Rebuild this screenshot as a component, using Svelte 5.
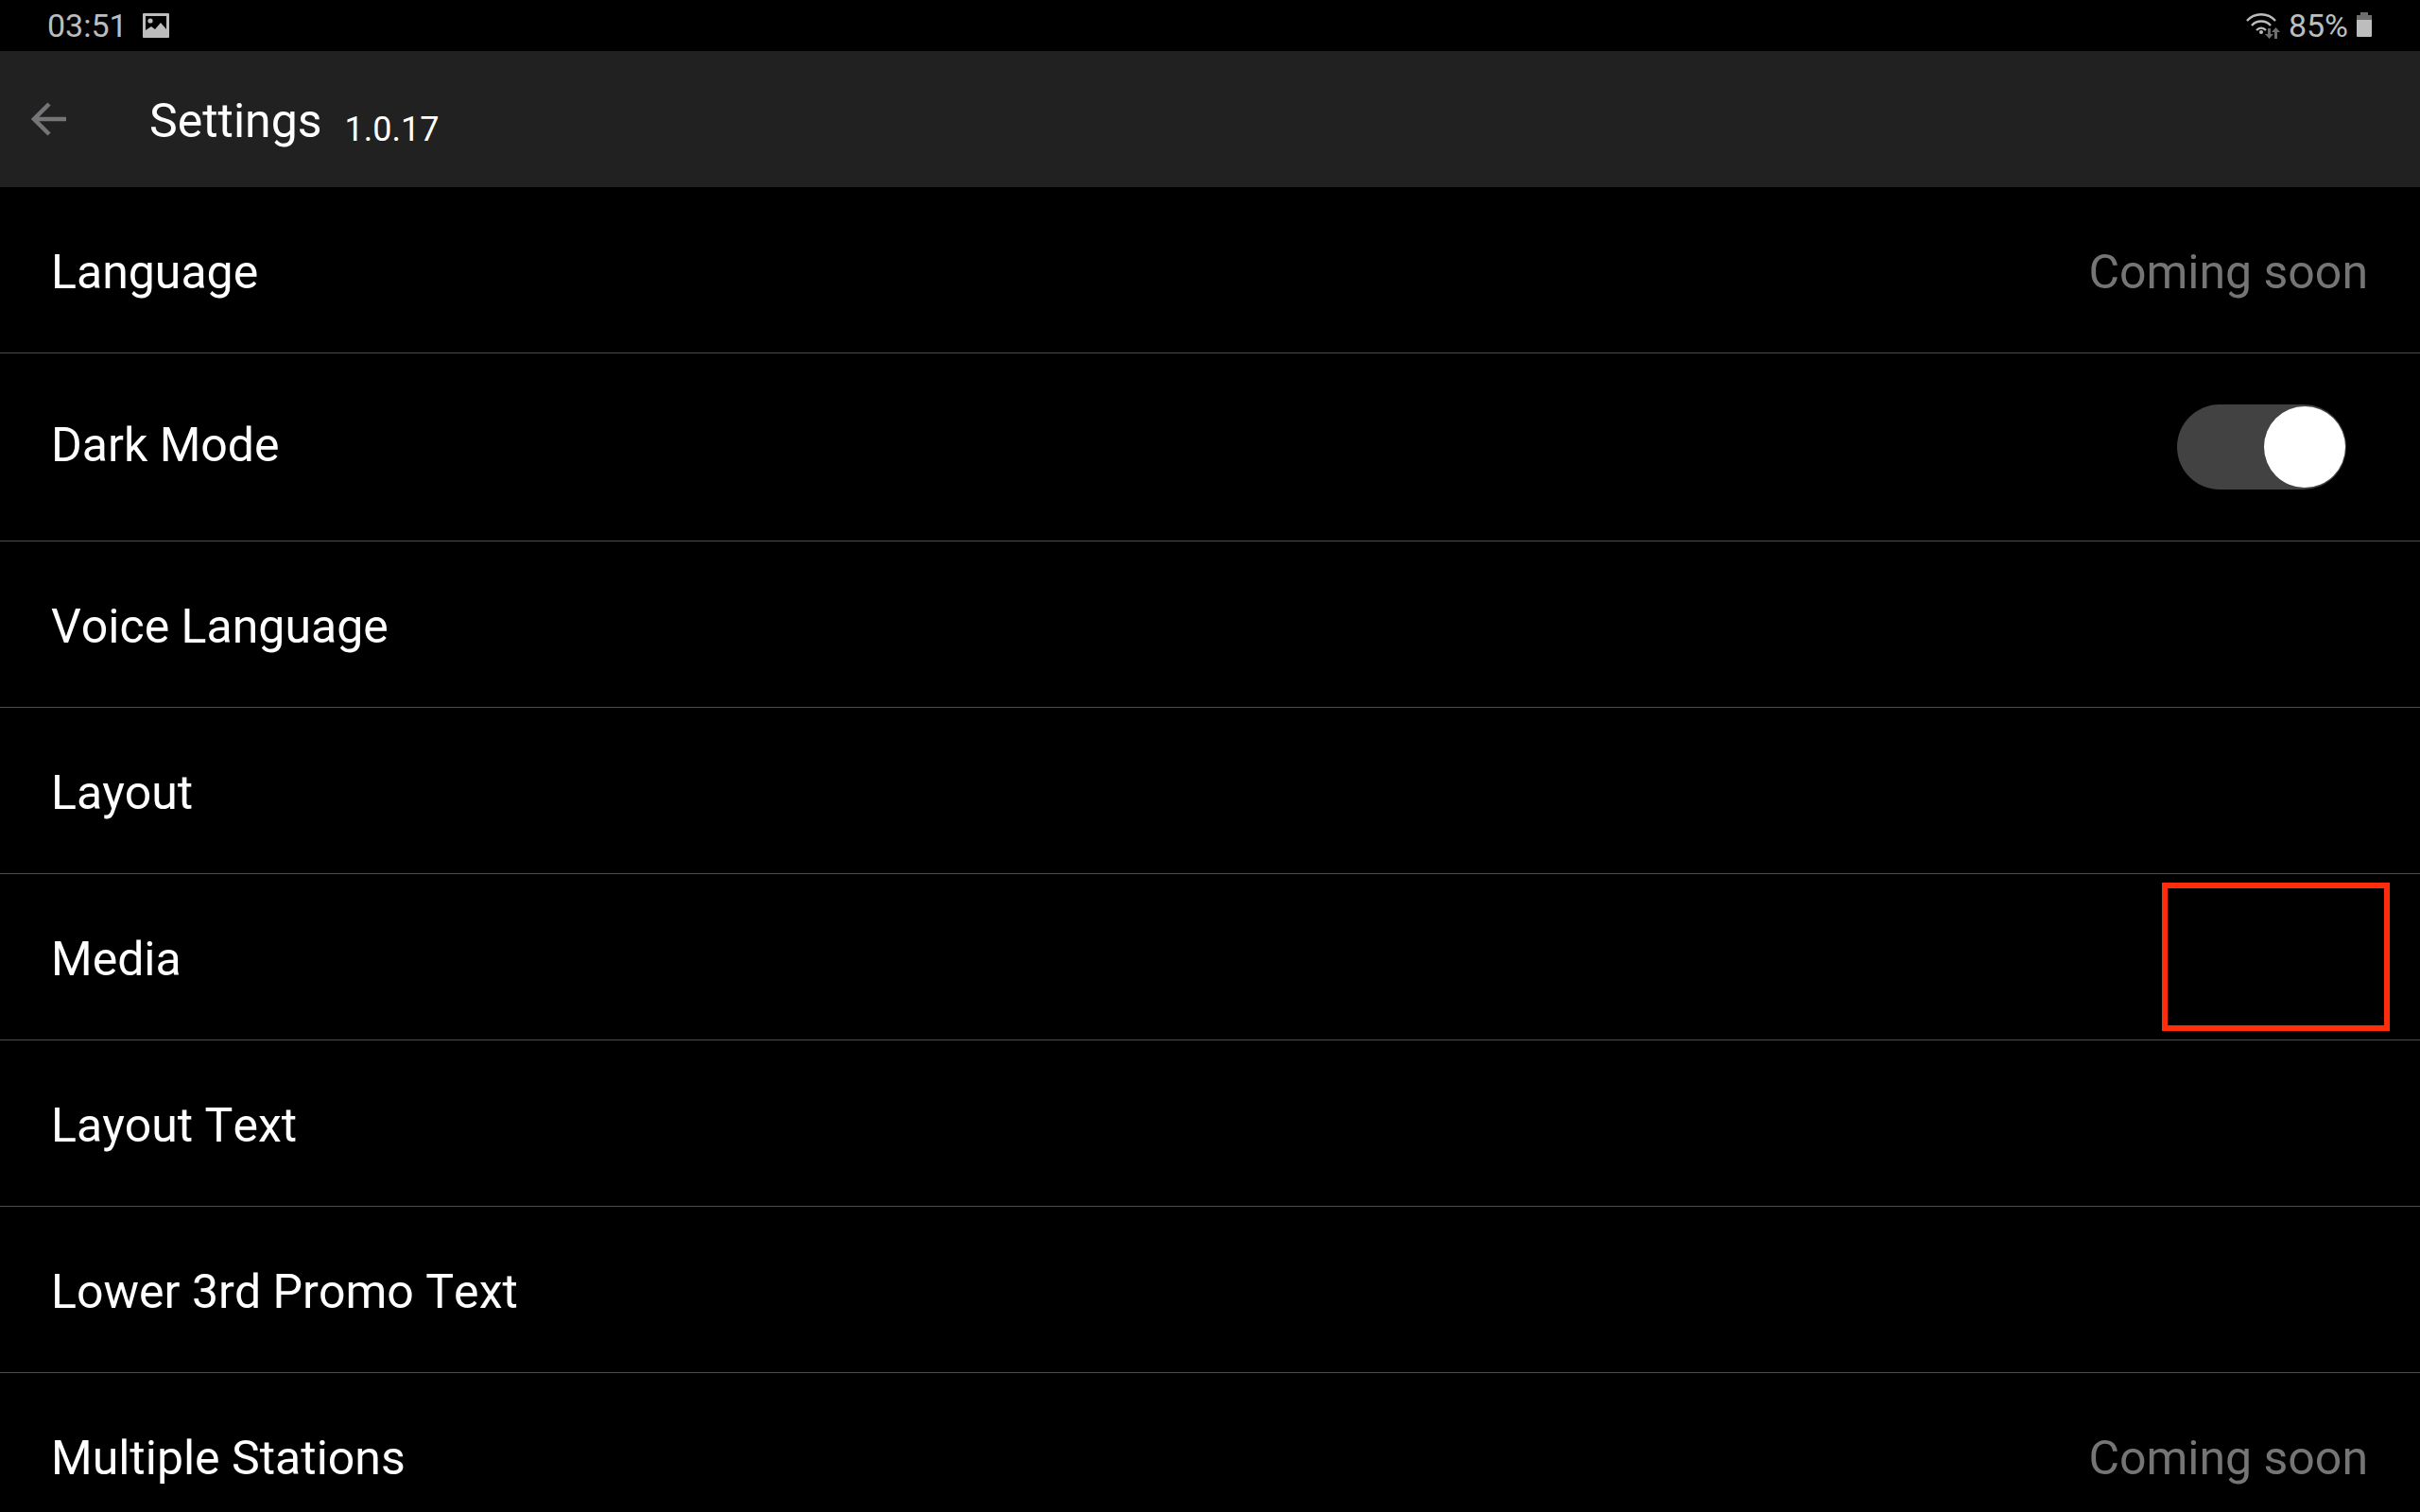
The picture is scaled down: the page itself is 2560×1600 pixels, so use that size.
<script>
  const rows = [
    { label: 'Language', note: 'Coming soon', h: 176 },
    { label: 'Dark Mode', toggle: true, h: 199 },
    { label: 'Voice Language', h: 176 },
    { label: 'Layout', h: 176 },
    { label: 'Media', marked: true, h: 176 },
    { label: 'Layout Text', h: 176 },
    { label: 'Lower 3rd Promo Text', h: 176 },
    { label: 'Multiple Stations', note: 'Coming soon', h: 176 }
  ];
</script>

<div class="screen">
  <div class="status">
    <div class="status-left">
      <span>03:51</span>
      <svg class="pic" width="28" height="26" viewBox="0 0 28 26">
        <path fill="#bdbdbd" fill-rule="evenodd" d="M1 0h26a1 1 0 0 1 1 1v24a1 1 0 0 1-1 1H1a1 1 0 0 1-1-1V1a1 1 0 0 1 1-1zM3 3v15l6-4 4 3 6-7 6 7V3z" />
        <circle cx="8" cy="8" r="2.600" fill="#bdbdbd" />
      </svg>
    </div>
    <div class="status-right">
      <svg width="38" height="28" viewBox="0 0 38 28">
        <g fill="none" stroke="#bdbdbd" stroke-width="2.400">
          <path d="M1 9C9 0 23 0 31 9" />
          <path d="M6 14c5-6 15-6 20 0" />
          <path d="M11 19c3-3 7-3 10 0" />
        </g>
        <circle cx="16" cy="21" r="2" fill="#bdbdbd" />
        <path fill="#6e6e6e" d="M23 17h3v6h3l-4.500 5-4.500-5h3z" />
        <path fill="#6e6e6e" d="M33 28h-3v-7h-3l4.500-5 4.500 5h-3z" />
      </svg>
      <span>85%</span>
      <svg width="18" height="28" viewBox="0 0 18 28">
        <path fill="#6e6e6e" d="M5 0h8v3h4v5H1V3h4z" />
        <path fill="#bdbdbd" d="M1 8h16v17a1 1 0 0 1-1 1H2a1 1 0 0 1-1-1z" />
      </svg>
    </div>
  </div>

  <header class="bar">
    <svg class="back" width="38" height="36" viewBox="0 0 38 36">
      <path fill="none" stroke="#757578" stroke-width="4.500" d="M37 18H4M19 2 3 18l16 16" />
    </svg>
    <h1>Settings</h1>
    <span class="version">1.0.17</span>
  </header>

  <div class="list">
    {#each rows as row}
      <div class="row" class:tall={row.toggle}>
        <span class="label">{row.label}</span>
        {#if row.note}
          <span class="note">{row.note}</span>
        {/if}
        {#if row.toggle}
          <div class="toggle"><div class="knob"></div></div>
        {/if}
        {#if row.marked}
          <div class="marker"></div>
        {/if}
      </div>
    {/each}
  </div>
</div>

<style>
  :global(body) {
    background: #000;
  }

  .screen {
    width: 2560px;
    height: 1600px;
    overflow: hidden;
    background: #000;
    color: #fff;
    font-family: Roboto, "Liberation Sans", sans-serif;
    font-kerning: none;
  }

  .status {
    height: 54px;
    display: flex;
    align-items: center;
    justify-content: space-between;
    padding: 0 50px;
    font-size: 34px;
    color: #bdbdbd;
  }

  .status-left,
  .status-right {
    display: flex;
    align-items: center;
  }

  .pic {
    margin-left: 16px;
  }

  .status-right span {
    margin: 0 8px 0 7px;
  }

  .bar {
    height: 144px;
    background: #212121;
    display: flex;
    align-items: center;
    padding-left: 33px;
  }

  .back {
    flex: none;
  }

  h1 {
    margin: 4px 0 0 87px;
    font-size: 50px;
    font-weight: 400;
    color: #fff;
  }

  .version {
    margin: 22px 0 0 24px;
    font-size: 36px;
  }

  .row {
    position: relative;
    box-sizing: border-box;
    height: 176px;
    display: flex;
    align-items: center;
    justify-content: space-between;
    padding: 0 55px 0 54px;
    border-bottom: 1px solid #4a4a4a;
  }

  .row.tall {
    height: 199px;
  }

  .label,
  .note {
    font-size: 50px;
    margin-top: 5px;
  }

  .tall .label {
    margin: 0 0 5px;
  }

  .note {
    color: #757575;
  }

  .toggle {
    width: 179px;
    height: 90px;
    margin-right: 23px;
    border-radius: 45px;
    background: #424242;
    display: flex;
    align-items: center;
    justify-content: flex-end;
    padding-right: 1px;
    box-sizing: border-box;
  }

  .knob {
    width: 86px;
    height: 86px;
    border-radius: 50%;
    background: #fff;
  }

  .marker {
    position: absolute;
    left: 2287px;
    top: 9px;
    width: 241px;
    height: 157px;
    box-sizing: border-box;
    border: 6px solid #ff2d0a;
  }
</style>
